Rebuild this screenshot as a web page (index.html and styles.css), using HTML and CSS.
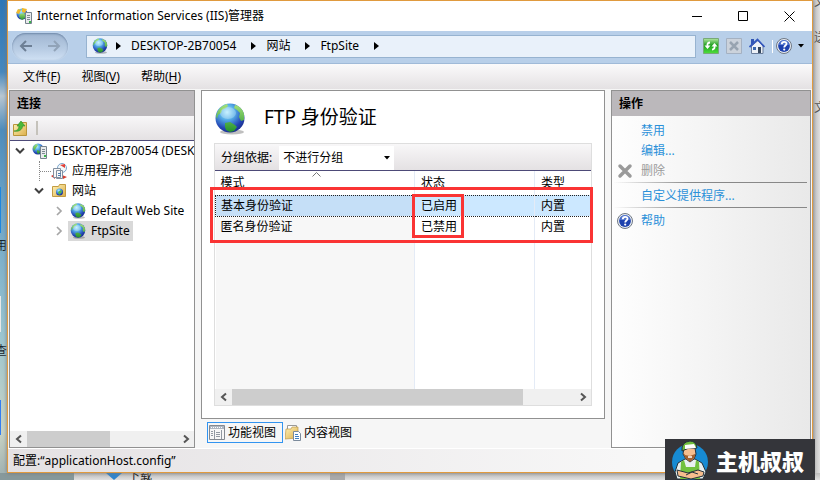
FILE: index.html
```html
<!DOCTYPE html>
<html lang="zh-CN">
<head>
<meta charset="utf-8">
<title>Internet Information Services (IIS)管理器</title>
<link rel="stylesheet" href="styles.css">
</head>
<body>
<svg class="defs" aria-hidden="true">
  <defs>
    <radialGradient id="sea" cx="40%" cy="30%" r="75%">
      <stop offset="0" stop-color="#b5edff"/><stop offset=".35" stop-color="#56aee8"/><stop offset=".75" stop-color="#2345b4"/><stop offset="1" stop-color="#182a86"/>
    </radialGradient>
    <linearGradient id="land" x1="0" y1="0" x2="0" y2="1"><stop offset="0" stop-color="#a5e27c"/><stop offset="1" stop-color="#23922b"/></linearGradient>
    <linearGradient id="folder" x1="0" y1="0" x2="1" y2="1"><stop offset="0" stop-color="#fff3b8"/><stop offset="1" stop-color="#dcae4a"/></linearGradient>
    <linearGradient id="refresh" x1="0" y1="0" x2="0" y2="1"><stop offset="0" stop-color="#b5e8a2"/><stop offset=".45" stop-color="#1f9f20"/><stop offset="1" stop-color="#4de03b"/></linearGradient>
    <symbol id="globe" viewBox="0 0 32 32">
      <ellipse cx="18" cy="29" rx="12" ry="2.5" fill="#000" opacity=".25"/>
      <circle cx="16" cy="15" r="14.5" fill="url(#sea)"/>
      <path fill="url(#land)" d="M3 10C5 5 9 2 13 1l1 2-2 2-4 2-1 3-3 2-1 4-1-3zM11 20l5-1 5 3 2 2-3 4-4 1-4-2-1-3zM21 2c5 1 8 5 9 9v6l-3 1-2-4 1-4-3-3-3-2z"/>
      <ellipse cx="14" cy="10" rx="8" ry="6" fill="#fff" opacity=".25"/>
    </symbol>
    <symbol id="server" viewBox="0 0 16 16">
      <circle cx="6" cy="6" r="5.5" fill="url(#sea)"/>
      <path fill="url(#land)" d="M1 4l3-3 2 1-2 3-2 3zM5 7l3 1-1 3-2-1z"/>
      <path fill="#e8eaec" stroke="#77838d" d="M8.500 3.500h6v12h-6z"/>
      <path stroke="#7e8992" d="M10 6.500h3M10 8.500h3M10 10.500h3"/><path fill="#3ab54a" d="M12 12h2v2h-2z"/>
    </symbol>
    <symbol id="help" viewBox="0 0 16 16">
      <circle cx="8" cy="8" r="7.500" fill="#e9edf3" stroke="#6f7884"/>
      <circle cx="8" cy="8" r="5.900" fill="#1e42ae"/><path d="M3 7a5 5 0 0 1 10 0z" fill="#7196e4" opacity=".6"/>
      <path fill="none" stroke="#fff" stroke-width="1.800" d="M5.800 6.200c0-3 4.700-3 4.700-.4 0 1.600-2.300 1.800-2.300 3.600"/><circle cx="8.200" cy="11.600" r="1.100" fill="#fff"/>
    </symbol>
    <symbol id="tri" viewBox="0 0 6 8"><path d="M0 0l5 4-5 4z"/></symbol>
    <symbol id="caret" viewBox="0 0 6 4"><path d="M0 0h6L3 3.500z"/></symbol>
    <symbol id="open" viewBox="0 0 10 10"><path fill="none" stroke="#404040" stroke-width="2" d="M1 2.500l4 4 4-4"/></symbol>
    <symbol id="closed" viewBox="0 0 10 10"><path fill="none" stroke="#a6a6a6" stroke-width="1.700" d="M3 1l4 4-4 4"/></symbol>
    <symbol id="left" viewBox="0 0 10 10"><path fill="none" stroke="#555" stroke-width="2" d="M7 1.500L3 5l4 3.500"/></symbol>
    <symbol id="right" viewBox="0 0 10 10"><path fill="none" stroke="#555" stroke-width="2" d="M3 1.500L7 5 3 8.500"/></symbol>
  </defs>
</svg>

<div class="desk-left" aria-hidden="true"><i class="tile t1"></i><span>用</span><i class="tile t2"></i><span>查</span><i class="tile t3"></i></div>
<div class="desk-right" aria-hidden="true"><span>文</span><span>送</span><span>文</span></div>
<div class="desk-bottom" aria-hidden="true"><svg width="20" height="8" viewBox="0 0 20 8"><path fill="#2f86d0" d="M2 0h16l-8 7z"/></svg><span>下载</span><i></i></div>

<div class="window">
  <header class="titlebar">
    <svg class="i16" viewBox="0 0 16 16"><circle cx="6" cy="6" r="5.500" fill="url(#sea)"/><path fill="url(#land)" d="M4 6l4-1 2 4-4 3-3-3z"/><path fill="#f0ba2d" d="M0 5L2 1l3 1-2 4zM6 0l5 1-2 4-3-1z"/><path fill="#e8eaec" stroke="#77838d" d="M9.500 4.500h6v11h-6z"/><path stroke="#7e8992" d="M11 7.500h3M11 9.500h3M11 11.500h3"/><path fill="#3ab54a" d="M13 13h2v2h-2z"/></svg>
    <h1>Internet Information Services (IIS)管理器</h1>
    <div class="controls">
      <button aria-label="最小化"><svg width="11" height="11"><path d="M0 5.500h10"/></svg></button>
      <button aria-label="最大化"><svg width="11" height="11"><path d="M.500.500h9v9h-9z"/></svg></button>
      <button aria-label="关闭"><svg width="11" height="11"><path d="M.500.500l10 10M10.500.500l-10 10"/></svg></button>
    </div>
  </header>

  <div class="addressbar">
    <div class="history">
      <button aria-label="后退"><svg width="14" height="12" viewBox="0 0 14 12"><path d="M13 6H2M7 1L2 6l5 5"/></svg></button>
      <button aria-label="前进"><svg width="14" height="12" viewBox="0 0 14 12"><path d="M1 6h11M7 1l5 5-5 5"/></svg></button>
    </div>
    <nav class="crumbs">
      <svg class="i16"><use href="#globe"/></svg>
      <svg class="tri"><use href="#tri"/></svg><a href="#">DESKTOP-2B70054</a>
      <svg class="tri"><use href="#tri"/></svg><a href="#">网站</a>
      <svg class="tri"><use href="#tri"/></svg><a href="#">FtpSite</a>
      <svg class="tri"><use href="#tri"/></svg>
    </nav>
    <div class="tools">
      <button aria-label="刷新"><svg class="i16" viewBox="0 0 16 16"><path fill="url(#refresh)" stroke="#78a978" d="M.500.500h15v15H.500z"/><path fill="none" stroke="#fff" stroke-width="1.800" d="M7 4.500Q4 4.500 4.500 8M9 11.500q3 0 2.500-4"/><path fill="#fff" d="M1.500 7.500h6l-3 3.500zM8.500 8.500h6l-3-3.500z"/></svg></button>
      <button aria-label="停止"><svg class="i16" viewBox="0 0 16 16"><path fill="#cbd2db" stroke="#a4b1c2" d="M.500.500h15v15H.500z"/><path stroke="#98a4b1" stroke-width="2.500" d="M4 4l8 8M12 4l-8 8"/></svg></button>
      <button aria-label="主页"><svg class="i16" viewBox="0 0 16 16"><path fill="#3256b4" d="M2 1h3v6H2z"/><path fill="#edf1f7" stroke="#6b7e9c" d="M2.500 8L9 2.500 14 8v7.500H2.500z"/><path fill="none" stroke="#3457bd" stroke-width="1.800" d="M.500 9L8.500 1.500 15.500 9"/><path fill="#3a66ae" d="M4 9h3v3H4z"/><path fill="#35465c" d="M9 9h3v6H9z"/></svg></button>
      <i class="bar"></i>
      <button class="helpbtn" aria-label="帮助"><svg class="i16"><use href="#help"/></svg><svg class="caret"><use href="#caret"/></svg></button>
    </div>
  </div>

  <nav class="menu">
    <button>文件(<u>F</u>)</button><button>视图(<u>V</u>)</button><button>帮助(<u>H</u>)</button>
  </nav>

  <main>
    <section class="panel connections">
      <h2>连接</h2>
      <div class="strip">
        <button aria-label="连接到"><svg class="i16" viewBox="0 0 16 16"><path fill="url(#folder)" stroke="#b9953a" d="M1.500 4.500h7l1-2h5v13h-13z"/><path fill="#4ab838" stroke="#2b8a28" stroke-width=".600" d="M2 11c3 0 5-2 5-5H5l4-5 4 5h-2.500c0 4-4 6-8.500 5z"/></svg></button><i></i>
      </div>
      <ul class="tree">
        <li><div class="node l1"><button aria-label="折叠"><svg class="chev"><use href="#open"/></svg></button><svg class="i16"><use href="#server"/></svg><a href="#">DESKTOP-2B70054 (DESKTOP-2B70054\admin)</a></div>
          <ul>
            <li><div class="node l2"><span class="joint"></span><svg class="i16" viewBox="0 0 16 16"><path fill="#d43d31" d="M0 13l4-2v5zM11 12l5 2-4 2z"/><circle cx="11" cy="5" r="4.500" fill="#f2f7fa" stroke="#7aa5cc"/><path fill="#e54036" d="M9 2l5-1v4z"/><path fill="#f8f8f8" stroke="#8490a0" d="M2.500 5.500h7v9h-7zM5.500 7.500h6v8h-6z"/><path stroke="#4d80b5" d="M7 10.500h3M7 12.500h3"/></svg><a href="#">应用程序池</a></div></li>
            <li><div class="node l2"><button aria-label="折叠"><svg class="chev"><use href="#open"/></svg></button><svg class="i16" viewBox="0 0 16 16"><path fill="url(#folder)" stroke="#c39c42" d="M1.500 3.500h6l1-2h6v12h-13z"/><circle cx="8.500" cy="9" r="3.500" fill="url(#sea)"/><path fill="#51ba48" d="M7 9l3-2 1 2-3 3z"/></svg><a href="#">网站</a></div>
              <ul>
                <li><div class="node l3"><button aria-label="展开"><svg class="chev"><use href="#closed"/></svg></button><a class="site" href="#"><svg class="i16"><use href="#globe"/></svg>Default Web Site</a></div></li>
                <li><div class="node l3"><button aria-label="展开"><svg class="chev"><use href="#closed"/></svg></button><a class="site selected" href="#"><svg class="i16"><use href="#globe"/></svg>FtpSite</a></div></li>
              </ul>
            </li>
          </ul>
        </li>
      </ul>
      <div class="scroll"><button aria-label="向左"><svg class="chev"><use href="#left"/></svg></button><div class="track"><i class="thumb short"></i></div><button aria-label="向右"><svg class="chev"><use href="#right"/></svg></button></div>
    </section>

    <div class="center">
      <section class="panel feature">
        <div class="heading"><svg class="big"><use href="#globe"/></svg><h2>FTP 身份验证</h2></div>
        <div class="list">
          <div class="group"><label for="grouping">分组依据:</label><div class="combo"><select id="grouping"><option>不进行分组</option></select><svg class="caret"><use href="#caret"/></svg></div></div>
          <div class="grid">
            <table>
              <colgroup><col class="c1"><col class="c2"><col></colgroup>
              <thead><tr><th>模式<svg class="sort" width="9" height="5"><path d="M.500 4.500l4-4 4 4"/></svg></th><th>状态</th><th>类型</th></tr></thead>
              <tbody>
                <tr class="active"><td>基本身份验证</td><td>已启用</td><td>内置</td></tr>
                <tr><td>匿名身份验证</td><td>已禁用</td><td>内置</td></tr>
                <tr class="rest"><td></td><td></td><td></td></tr>
              </tbody>
            </table>
          </div>
          <div class="scroll"><button aria-label="向左"><svg class="chev"><use href="#left"/></svg></button><div class="track"><i class="thumb long"></i></div><button aria-label="向右"><svg class="chev"><use href="#right"/></svg></button></div>
          <div class="mark rows"></div><div class="mark state"></div>
        </div>
      </section>
      <div class="views">
        <button class="on"><svg class="i16" viewBox="0 0 16 16"><path fill="#f7f7f7" stroke="#848990" d="M.500.500h15v14H.500z"/><path fill="#aeb6c1" d="M1 1h14v3H1z"/><path stroke="#fff" stroke-dasharray="1 1" d="M2 2.500h12"/><path stroke="#9299a2" d="M2 6.500h2M2 8.500h2M2 10.500h2M5.500 5v9M12.500 5v9M7 7.500h4M7 9.500h4M7 11.500h4"/></svg>功能视图</button>
        <button><svg class="i16" viewBox="0 0 16 16"><path fill="#fff" stroke="#999" d="M2.500.500h9v9h-9z"/><path fill="url(#folder)" stroke="#ba994e" stroke-width=".700" d="M0 14L1 4h5l1-2h6v11z"/><path fill="#fff" stroke="#7c8b9c" d="M8.500 6.500h5l2 2v7h-7z"/><path stroke="#3f7fc4" d="M10 9.500h3M10 11.500h4M10 13.500h4"/></svg>内容视图</button>
      </div>
    </div>

    <aside class="panel actions">
      <h2>操作</h2>
      <ul>
        <li><a href="#">禁用</a></li>
        <li><a href="#">编辑...</a></li>
        <li class="off"><svg class="i16" viewBox="0 0 16 16"><path stroke="#9a9a9a" stroke-width="3.500" stroke-linecap="round" d="M3 3l10 10M13 3L3 13"/></svg><a>删除</a></li>
      </ul>
      <ul><li><a href="#">自定义提供程序...</a></li></ul>
      <ul><li><svg class="i16"><use href="#help"/></svg><a href="#">帮助</a></li></ul>
    </aside>
  </main>

  <footer>配置:“applicationHost.config”</footer>
</div>

<div class="brand">
  <svg width="38" height="40" viewBox="0 0 38 40">
    <circle cx="19" cy="22" r="18" fill="#178bd3"/>
    <path fill="#e9f0f0" stroke="#24313b" d="M6 39l-2-7 3-9 7-4h10l7 4 4 9-3 7z"/>
    <path fill="#f6bd8d" stroke="#24313b" d="M13 8h11l1 6-2 5-4 3-4-3-3-5z"/>
    <path fill="#a4602f" d="M12 12l2 3 5 1 5-2v3l-5 5-5-4z"/><path stroke="#fff" stroke-width="1.500" d="M17 17h4"/>
    <path fill="#6fbd3d" stroke="#24313b" d="M11 11q-1-9 8-10 6 0 7 7l-8 0z"/><path fill="#fff" d="M14 5l9-1 2 4-11 1z"/>
    <path fill="#72c13d" d="M10 22l3-2 2 7h9l1-7 3 2 1 17H9z"/>
    <path fill="#f6bd8d" stroke="#24313b" d="M6 30l11 3 10-3 6 2-1 4-12 3-13-3z"/><path fill="none" stroke="#24313b" d="M15 35l6-3 6 2"/>
  </svg>
  <strong>主机叔叔</strong>
</div>
</body>
</html>
```
FILE: styles.css
```css
* { box-sizing: border-box; }
body {
  margin: 0; height: 100vh; overflow: hidden; position: relative; padding: 0 7px 7px;
  background: #d3d3d3; color: #000;
  font: 12px/20px "Noto Sans", "Noto Sans CJK SC", sans-serif;
}
h1, h2, ul { margin: 0; padding: 0; font: inherit; list-style: none; }
button { border: 0; padding: 0; margin: 0; background: none; font: inherit; color: inherit; display: flex; align-items: center; justify-content: center; }
a { color: inherit; text-decoration: none; }
svg { display: block; flex: none; }
.defs { position: absolute; width: 0; height: 0; }
.i16 { width: 16px; height: 16px; }
.tri { width: 6px; height: 8px; }
.caret { width: 6px; height: 4px; }
.chev { width: 10px; height: 10px; }

.desk-left { position: absolute; left: 0; top: 0; bottom: 0; width: 7px; overflow: hidden; background: linear-gradient(#2e77b8, #4788be 15%, #b9c7d2 20%, #4e8dbd 27%, #6fa6c8 45%, #9cc6d0 70%, #c9d3c4 90%, #9caeb0); }
.desk-left span { position: absolute; right: 0; top: 236px; color: #17242e; }
.desk-left span + i + span { top: 341px; }
.tile { position: absolute; left: 0; width: 1px; background: #1d86e0; }
.t1 { top: 187px; height: 46px; }
.t2 { top: 296px; height: 36px; background: #e8e8e8; }
.t3 { top: 400px; height: 35px; background: #337df3; }
.desk-right { position: absolute; right: 0; top: 0; bottom: 0; width: 7px; overflow: hidden; background: linear-gradient(90deg, #bdbdbd, #e0e0e0); color: #555; }
.desk-right span { position: absolute; left: 1px; top: -8px; }
.desk-right span:nth-child(2) { top: 28px; }
.desk-right span:nth-child(3) { top: 98px; }
.desk-bottom { position: absolute; left: 0; right: 0; bottom: 0; height: 7px; overflow: hidden; background: linear-gradient(90deg, #87999b 74px, transparent 74px), linear-gradient(#bdbdbd, #e0e0e0); display: flex; padding-left: 104px; gap: 4px; }
.desk-bottom span { line-height: 6px; color: #222; }
.desk-bottom i { width: 15px; margin-left: 174px; background: #aaa; }

.window { position: relative; height: 100%; display: flex; flex-direction: column; border: 1px solid #e09a3e; background: #f6f6f6; box-shadow: 0 0 4px #777; }
.titlebar { height: 30px; display: flex; align-items: center; background: #fff; padding-left: 8px; gap: 5px; }
.controls { display: flex; margin-left: auto; align-self: stretch; }
.controls button { width: 46px; }
.controls path { fill: none; stroke: #000; }

.addressbar { height: 33px; display: flex; align-items: center; background: #b8cfe9; border-bottom: 1px solid #a0bad8; padding: 0 8px 2px 4px; }
.history { width: 56px; height: 27px; display: flex; align-items: center; justify-content: space-around; border-radius: 14px; margin-right: 18px; background: linear-gradient(#9fb5d0, #b8cce4 60%, #cfe0f3); box-shadow: inset 0 1px 2px #6f88a9, 0 0 1px #eaf3fc; }
.history path { fill: none; stroke: #6d7f95; stroke-width: 2; }
.history button + button path { stroke: #91a3b8; }
.crumbs { flex: 1; height: 23px; display: flex; align-items: center; background: #e9f1fa; border: 1px solid #97b3d0; padding-left: 5px; }
.crumbs .tri { margin: 0 9px 0 15px; }
.crumbs .i16 + .tri { margin-left: 8px; }
.tools { display: flex; align-items: center; gap: 7px; margin-left: 7px; }
.bar { width: 1px; height: 13px; background: #fff; }
.tools .bar + button { gap: 6px; margin-left: -4px; }

.menu { height: 25px; display: flex; align-items: center; gap: 21px; padding-left: 15px; background: linear-gradient(#fbfafb, #e4e1e3); }
u { text-underline-offset: 2px; }

main { flex: 1; min-height: 0; display: grid; grid-template-columns: 186px minmax(0, 1fr) 200px; gap: 6px; padding: 1px 1px 0; }
.panel { border: 1px solid #919191; background: #fff; min-width: 0; min-height: 0; display: flex; flex-direction: column; }
.connections h2, .actions h2 { height: 25px; line-height: 25px; padding-left: 7px; background: #bbb8bb; font-weight: 700; }
.strip { height: 25px; display: flex; align-items: center; gap: 8px; padding-left: 2px; background: linear-gradient(#f8f7f8, #e4e1e3); border-bottom: 1px solid #4d4a78; }
.strip i { width: 2px; height: 14px; background: #c5c2bb; }
.tree { flex: 1; overflow: hidden; }
.tree ul { overflow: visible; }
.node { height: 20px; display: flex; align-items: center; white-space: nowrap; }
.node button { width: 11px; margin-right: 7px; }
.node > a { margin-left: 5px; }
.l1 { padding-left: 5px; }
.l2 { padding-left: 23px; }
.l3 { padding-left: 43px; }
.l3 button { margin-right: 0; }
.joint { width: 12px; height: 20px; margin: 0 0 0 6px; border-left: 1px dotted #888; background: repeating-linear-gradient(90deg, #888 0 1px, transparent 1px 2px) 0 10px / 12px 1px no-repeat; }
.node .site { height: 20px; display: flex; align-items: center; gap: 5px; margin-left: 4px; padding: 0 3px 0 2px; }
.selected { background: #d9d9d9; }
.scroll { height: 16px; display: flex; background: #f0f0f0; }
.scroll button { width: 17px; }
.track { flex: 1; }
.thumb { display: block; height: 100%; background: #cdcdcd; }
.short { width: 55%; }
.long { width: 85%; }

.center { display: flex; flex-direction: column; min-width: 0; min-height: 0; }
.feature { flex: 1; padding: 0 12px 12px; }
.heading { height: 52px; display: flex; align-items: center; gap: 18px; }
.big { width: 32px; height: 32px; margin-top: 4px; }
.heading h2 { font-size: 19px; line-height: 28px; }
.list { position: relative; flex: 1; min-height: 0; display: flex; flex-direction: column; border: 1px solid #dedede; }
.group { height: 27px; display: flex; align-items: center; padding: 2px 0 0 6px; gap: 7px; background: linear-gradient(#f8f7f8, #e4e1e3); border-bottom: 1px solid #4d4a78; }
.combo { width: 115px; height: 24px; display: flex; align-items: center; background: #fff; padding-right: 4px; }
select { flex: 1; min-width: 0; appearance: none; border: 0; background: none; padding: 0 0 0 4px; font: inherit; color: inherit; }
.grid { flex: 1; min-height: 0; background: #fff; }
table { width: 100%; height: 100%; border-collapse: collapse; table-layout: fixed; }
.c1 { width: 199px; }
.c2 { width: 120px; }
th, td { padding: 0 0 0 6px; text-align: left; font-weight: 400; border-left: 1px solid #e4ebf6; }
th:first-child, td:first-child { border-left: 0; padding-left: 5px; }
th { position: relative; height: 24px; }
tr { height: 21px; }
.rest { height: auto; }
.sort { position: absolute; left: 96px; top: 1px; }
.sort path { fill: none; stroke: #777; }
td:first-child { background: #f7f7f7; }
.active td { background: #cce8ff; border-top: 1px dotted #222; border-bottom: 1px dotted #222; }
.active td:first-child { background: #c5dff7; border-left: 1px dotted #222; }
.mark { position: absolute; border: 3px solid #fa3434; pointer-events: none; }
.rows { left: -5px; right: -2px; top: 43px; height: 56px; }
.state { left: 197px; top: 50px; width: 52px; height: 44px; }
.views { height: 29px; display: flex; align-items: flex-start; padding: 3px 6px 0; }
.views button { height: 21px; gap: 3px; padding: 0 6px 0 1px; border: 1px solid transparent; }
.views .on { border-color: #3294f0; }

.actions { background: linear-gradient(90deg, #fefefe, #e9e9e9); }
.actions ul { padding: 3px 0 1px; margin: 0 3px 0 2px; }
.actions h2 + ul { padding-top: 5px; }
.actions ul + ul { border-top: 1px solid; border-image: linear-gradient(90deg, transparent, #888 40%) 1; }
.actions li { position: relative; height: 20px; display: flex; align-items: center; gap: 8px; padding-left: 27px; color: #2b91d9; }
.actions .i16 { margin-left: -24px; }
.actions .off { color: #9b9b9b; }

footer { height: 24px; line-height: 23px; padding-left: 5px; border-top: 1px solid #fff; background: linear-gradient(90deg, #e4e1e3, #f8f8f8 80%); }
.brand { position: absolute; right: 5px; bottom: 0; width: 150px; height: 41px; display: flex; align-items: center; gap: 7px; padding-left: 6px; background: #34353a; color: #fff; }
.brand strong { font: 900 22px/40px "Noto Sans CJK SC", sans-serif; }
```
